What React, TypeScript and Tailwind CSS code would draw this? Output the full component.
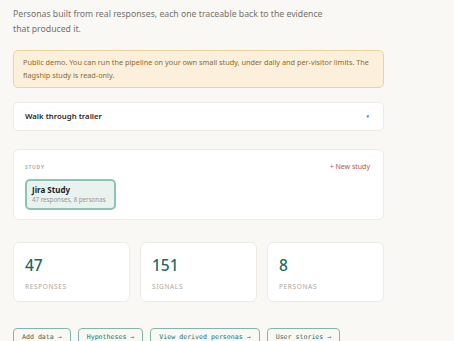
const stats = [
  { value: '47', label: 'Responses' },
  { value: '151', label: 'Signals' },
  { value: '8', label: 'Personas' },
];

const links = ['Add data →', 'Hypotheses →', 'View derived personas →', 'User stories →'];

export default function App() {
  return (
    <div className="min-h-[341px] bg-[#faf8f4] font-['Noto_Sans',sans-serif] overflow-hidden">
      <div className="w-[371px] ml-[13px] pt-[7px]">
        <p className="text-[8.7px] leading-[15px] text-[#74716b] w-[318px]">
          Personas built from real responses, each one traceable back to the evidence that produced it.
        </p>

        <div className="mt-[13px] rounded-[5px] border border-[#ecd29b] bg-[#fcf0dc] px-[9px] py-[5px] text-[7.3px] leading-[13px] text-[#8c6a28]">
          Public demo. You can run the pipeline on your own small study, under daily and per-visitor limits. The
          flagship study is read-only.
        </div>

        <div className="mt-[14px] h-[29px] rounded-[5px] border border-[#eeebe5] bg-white pl-[11px] pr-[13px] flex items-center justify-between">
          <span className="text-[7.8px] font-semibold text-[#2b2a27]">Walk through trailer</span>
          <span className="text-[4.5px] text-[#2a7a6c]">▼</span>
        </div>

        <div className="mt-[18px] h-[71px] rounded-[6px] border border-[#eeebe5] bg-white pl-[11px] pr-[13px] pt-[12px]">
          <div className="flex items-center justify-between">
            <span className="text-[5px] tracking-[0.15em] text-[#a49f97] font-semibold">STUDY</span>
            <span className="text-[7px] text-[#b4574f]">+ New study</span>
          </div>
          <div className="mt-[6px] w-[91px] h-[31px] whitespace-nowrap rounded-[5px] border-2 border-[#8cc3b6] bg-[#e9f2ef] px-[5px] pt-[3px]">
            <div className="text-[8px] leading-[11px] font-bold text-[#1f1f1d]">Jira Study</div>
            <div className="text-[6.2px] leading-[9px] text-[#9b968e]">47 responses, 8 personas</div>
          </div>
        </div>

        <div className="mt-[22px] grid grid-cols-3 gap-[10px]">
          {stats.map((s) => (
            <div key={s.label} className="h-[60px] rounded-[6px] border border-[#eeebe5] bg-white px-[11px] pt-[13px]">
              <div className="text-[15.5px] leading-[18px] font-medium text-[#1d6b5f]">{s.value}</div>
              <div className="mt-[8px] text-[6.5px] tracking-[0.1em] uppercase text-[#aaa59d]">{s.label}</div>
            </div>
          ))}
        </div>

        <div className="mt-[26px] flex gap-[7px]">
          {links.map((l) => (
            <span
              key={l}
              className="rounded-[4px] border border-[#7fb8ab] px-[8px] h-[20px] flex items-center font-['DejaVu_Sans_Mono',monospace] text-[6.6px] text-[#2a6e62]"
            >
              {l}
            </span>
          ))}
        </div>
      </div>
    </div>
  );
}
